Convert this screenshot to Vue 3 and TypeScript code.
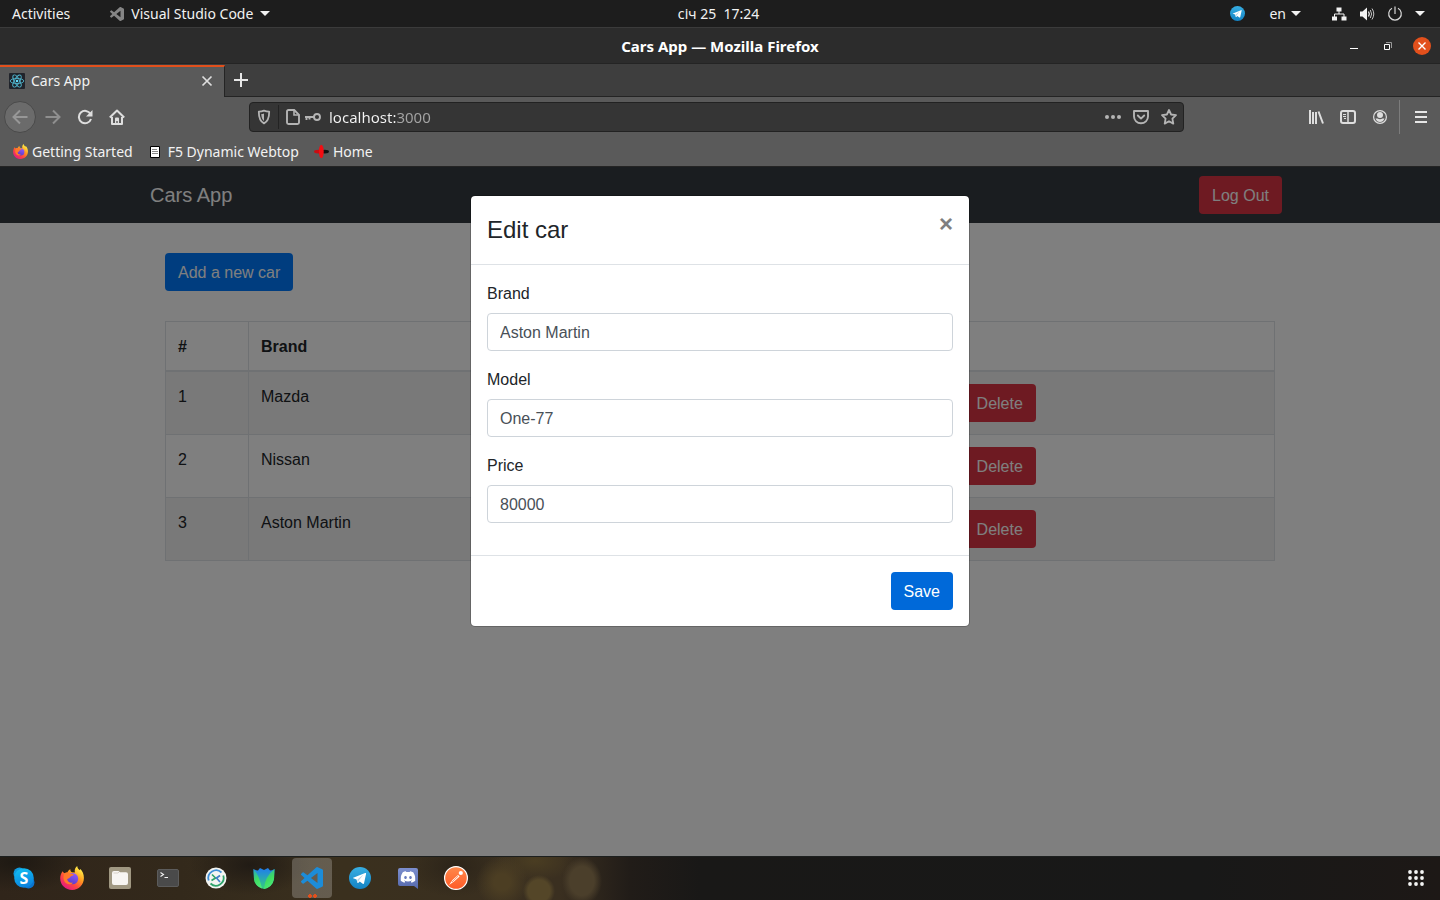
<script setup lang="ts">
import { reactive, ref } from 'vue'

interface Car {
  id: number
  brand: string
  model?: string
  price?: number
}

const cars = ref<Car[]>([
  { id: 1, brand: 'Mazda' },
  { id: 2, brand: 'Nissan' },
  { id: 3, brand: 'Aston Martin', model: 'One-77', price: 80000 },
])

const address = ref('localhost:3000')
const showModal = ref(true)
const editedId = ref(3)
const form = reactive({ brand: 'Aston Martin', model: 'One-77', price: '80000' })

function edit(car: Car) {
  editedId.value = car.id
  form.brand = car.brand
  form.model = car.model ?? ''
  form.price = String(car.price ?? '')
  showModal.value = true
}

function remove(car: Car) {
  cars.value = cars.value.filter((c) => c.id !== car.id)
}

function save() {
  const car = cars.value.find((c) => c.id === editedId.value)
  if (car) {
    car.brand = form.brand
    car.model = form.model
    car.price = Number(form.price)
  }
  showModal.value = false
}
</script>

<template>
  <div class="desktop">
    <svg class="sprites" width="0" height="0" aria-hidden="true">
      <defs>
        <linearGradient id="ff-body" x1="0.85" y1="0.1" x2="0.2" y2="0.95">
          <stop offset="0" stop-color="#fff14a" />
          <stop offset="0.35" stop-color="#ff9a1f" />
          <stop offset="0.65" stop-color="#ff4a3d" />
          <stop offset="1" stop-color="#e31587" />
        </linearGradient>
        <linearGradient id="ff-core" x1="0.7" y1="0" x2="0.3" y2="1">
          <stop offset="0" stop-color="#9059ff" />
          <stop offset="1" stop-color="#5b3bc4" />
        </linearGradient>
        <linearGradient id="tg-bg" x1="0" y1="0" x2="0" y2="1">
          <stop offset="0" stop-color="#37aee2" />
          <stop offset="1" stop-color="#1483c4" />
        </linearGradient>
        <linearGradient id="skype-bg" x1="0.3" y1="0" x2="0.6" y2="1">
          <stop offset="0" stop-color="#12bdf2" />
          <stop offset="1" stop-color="#0a7fdc" />
        </linearGradient>
        <linearGradient id="tulip-mid" x1="0" y1="0" x2="0" y2="1">
          <stop offset="0" stop-color="#1f7cf0" />
          <stop offset="1" stop-color="#35d07a" />
        </linearGradient>
        <linearGradient id="tulip-side" x1="0" y1="0" x2="0.4" y2="1">
          <stop offset="0" stop-color="#28a3c8" />
          <stop offset="0.6" stop-color="#3fdc62" />
          <stop offset="1" stop-color="#4be874" />
        </linearGradient>
        <linearGradient id="postman-bg" x1="0" y1="0" x2="0" y2="1">
          <stop offset="0" stop-color="#ff8a4c" />
          <stop offset="1" stop-color="#ff5a26" />
        </linearGradient>
        <linearGradient id="discord-bg" x1="0" y1="0" x2="0" y2="1">
          <stop offset="0" stop-color="#7d8fce" />
          <stop offset="1" stop-color="#5468ac" />
        </linearGradient>
      </defs>
      <symbol id="i-vscode" viewBox="0 0 24 24">
        <path d="M23.15 2.587L18.21.21a1.494 1.494 0 0 0-1.705.29l-9.46 8.63-4.12-3.128a.999.999 0 0 0-1.276.057L.327 7.261A1 1 0 0 0 .326 8.74L3.899 12 .326 15.26a1 1 0 0 0 .001 1.479L1.65 17.94a.999.999 0 0 0 1.276.057l4.12-3.128 9.46 8.63a1.492 1.492 0 0 0 1.704.29l4.942-2.377A1.5 1.5 0 0 0 24 20.06V3.939a1.5 1.5 0 0 0-.85-1.352zm-5.146 14.861L10.826 12l7.178-5.448v10.896z" fill="currentColor" />
      </symbol>
      <symbol id="i-telegram" viewBox="0 0 24 24">
        <circle cx="12" cy="12" r="12" fill="url(#tg-bg)" />
        <path d="M4.6 11.8 17.6 6.6c.7-.3 1.200.1 1 1.100L16.400 17.600c-.2.9-.7 1.100-1.400.7l-3.300-2.500-1.700 1.600c-.3.300-.7.200-.8-.2l-1-3.700-3.500-1.100c-.6-.2-.6-.4-.1-.6z" fill="#fff" />
        <path d="M9.200 17.200v-3.600l6.600-5.400-4.700 6z" fill="#b9d6e8" />
      </symbol>
      <symbol id="i-firefox" viewBox="0 0 24 24">
        <path d="M2.500 5.200c.7 1 1.300 1.600 2 2 .8-.6 1.800-.9 2.900-.8.500-1.400 1.600-2.600 3-3.200-.2 1.400.3 2.400 1.600 3l2.900.4c-.7-2.700.4-5 2.300-6.500.1 2 1.200 3 2.500 4.100l.7-1.100c2 2 3.500 5 3.500 9C23.900 18.900 18.700 24 12.200 24 5.400 24 .2 19 .2 12.600c0-2.900.8-5.300 2.300-7.400z" fill="url(#ff-body)" />
        <circle cx="12.600" cy="12.700" r="5.600" fill="url(#ff-core)" />
        <path d="M4.500 7.200c1.900-1 4.200-.8 5.700.7 1.300-.4 3 .1 3.700.9-.7 1-2.100 1-3.200 1.600-.7.400-.9 1.300-1.700 1.900-.9.600-1.600.6-1.900 1.200.5 2.400 3.400 3.800 6 2.900-1.500 2.600-6.500 2.600-8.500-.8-1.500-2.500-1.500-5.600-.1-8.400z" fill="#ff7a2a" />
      </symbol>
      <symbol id="i-caret" viewBox="0 0 10 5">
        <path d="M0 0h10L5 5z" fill="#f2f2f2" />
      </symbol>
    </svg>

    <header class="topbar">
      <div class="top-left">
        <button class="plain" type="button">Activities</button>
        <button class="plain app-menu" type="button">
          <svg class="app-glyph" width="14" height="14"><use href="#i-vscode" /></svg>
          Visual Studio Code
          <svg class="caret" width="10" height="5"><use href="#i-caret" /></svg>
        </button>
      </div>
      <button class="plain clock" type="button">січ 25&nbsp; 17:24</button>
      <div class="top-right">
        <svg width="15" height="15"><use href="#i-telegram" /></svg>
        <button class="plain lang" type="button">
          en
          <svg class="caret" width="10" height="5"><use href="#i-caret" /></svg>
        </button>
        <button class="plain system" type="button" aria-label="System menu">
          <svg width="16" height="16" viewBox="0 0 16 16">
            <path d="M5.500 1.500h5v4h-5zM1 10.500h5v4H1zM10.500 10.500h5v4h-5z" fill="#f2f2f2" />
            <path d="M8 5v3M3.500 11V8h9.500v3" fill="none" stroke="#f2f2f2" />
          </svg>
          <svg width="16" height="16" viewBox="0 0 16 16">
            <path d="M1 5.500h2.500L8 1.500v13l-4.500-4H1z" fill="#f2f2f2" />
            <path d="M9.500 5.500q1.600 2.500 0 5" fill="none" stroke="#f2f2f2" stroke-width="1.300" />
            <path d="M11.300 4q2.600 4 0 8M13 2.500q3.600 5.500 0 11" fill="none" stroke="#c4c4c4" />
          </svg>
          <svg width="16" height="16" viewBox="0 0 16 16">
            <path d="M5 2.200a6.300 6.300 0 1 0 6 0M8 .5v7.500" fill="none" stroke="#d8d8d8" stroke-width="1.200" />
          </svg>
          <svg class="caret" width="10" height="5"><use href="#i-caret" /></svg>
        </button>
      </div>
    </header>

    <div class="titlebar">
      <span class="window-title">Cars App — Mozilla Firefox</span>
      <div class="window-controls">
        <button type="button" aria-label="Minimize">
          <svg width="18" height="18" viewBox="0 0 18 18"><path d="M5 11.500h8" stroke="#fff" /></svg>
        </button>
        <button type="button" aria-label="Restore">
          <svg width="18" height="18" viewBox="0 0 18 18">
            <path d="M7 5.500h5.500V11" fill="none" stroke="#999" />
            <path d="M5.500 7.500h5v5h-5z" fill="none" stroke="#fff" />
          </svg>
        </button>
        <button type="button" aria-label="Close window">
          <svg width="18" height="18" viewBox="0 0 18 18">
            <circle cx="9" cy="9" r="9" fill="#e2501c" />
            <path d="M5.500 5.500l7 7M12.500 5.500l-7 7" stroke="#fff" stroke-width="1.400" />
          </svg>
        </button>
      </div>
    </div>

    <div class="tabstrip">
      <div class="tab">
        <svg width="16" height="16" viewBox="0 0 16 16">
          <rect width="16" height="16" rx="1" fill="#20232a" />
          <g fill="none" stroke="#4fb3cb" stroke-width="0.900">
            <ellipse cx="8" cy="8" rx="6.800" ry="2.600" />
            <ellipse cx="8" cy="8" rx="6.800" ry="2.600" transform="rotate(60 8 8)" />
            <ellipse cx="8" cy="8" rx="6.800" ry="2.600" transform="rotate(120 8 8)" />
          </g>
          <circle cx="8" cy="8" r="1.300" fill="#61dafb" />
        </svg>
        <span class="tab-title">Cars App</span>
        <button type="button" aria-label="Close tab">
          <svg width="12" height="12" viewBox="0 0 12 12"><path d="M1.500 1.500l9 9M10.500 1.500l-9 9" stroke="#dedede" stroke-width="1.700" /></svg>
        </button>
      </div>
      <button class="new-tab" type="button" aria-label="New tab">
        <svg width="14" height="14" viewBox="0 0 14 14"><path d="M7 0v14M0 7h14" stroke="#e6e6e6" stroke-width="2" /></svg>
      </button>
    </div>

    <div class="toolbar">
      <div class="nav-buttons">
        <button class="back" type="button" aria-label="Back">
          <svg width="16" height="16" viewBox="0 0 16 16"><path d="M15.500 8H1.500M8 1.500L1.500 8 8 14.500" fill="none" stroke="#979797" stroke-width="2" /></svg>
        </button>
        <button type="button" aria-label="Forward">
          <svg width="16" height="16" viewBox="0 0 16 16"><path d="M.5 8h14M8 1.500L14.500 8 8 14.500" fill="none" stroke="#8f8f8f" stroke-width="2" /></svg>
        </button>
        <button type="button" aria-label="Reload">
          <svg width="16" height="16" viewBox="0 0 16 16">
            <path d="M13.500 5A6.200 6.200 0 1 0 14 10" fill="none" stroke="#dedede" stroke-width="2" />
            <path d="M15.500 1v6.500H9z" fill="#dedede" />
          </svg>
        </button>
        <button type="button" aria-label="Home">
          <svg width="16" height="16" viewBox="0 0 16 16">
            <path d="M.8 8.500L8 1.500l7.200 7" fill="none" stroke="#dedede" stroke-width="2" stroke-linejoin="round" />
            <path d="M3 8v7h10V8" fill="none" stroke="#dedede" stroke-width="2" stroke-linejoin="round" />
            <path d="M6 15V9.500q0-1 1-1h2q1 0 1 1V15H8.700v-3H7.300v3z" fill="#dedede" />
          </svg>
        </button>
      </div>
      <div class="spacer"></div>
      <div class="urlbar">
        <button class="shield" type="button" aria-label="Tracking protection">
          <svg width="16" height="16" viewBox="0 0 16 16">
            <path d="M8 1.600q2.500 1 5.200 1.100 0 9-5.200 11.700Q2.800 11.700 2.800 2.700 5.500 2.600 8 1.600z" fill="none" stroke="#b4b4b4" stroke-width="1.800" stroke-linejoin="round" />
            <path d="M8 4.500v7.400Q5.300 10 5.300 5.100 6.800 5 8 4.500z" fill="#b4b4b4" />
          </svg>
        </button>
        <span class="url-icons">
          <svg width="16" height="16" viewBox="0 0 16 16">
            <path d="M3.500 1h5.700L14 5.800v7.700Q14 15 12.500 15h-9Q2 15 2 13.500v-11Q2 1 3.500 1z" fill="none" stroke="#b4b4b4" stroke-width="1.900" />
            <path d="M9 1.500V6h4.500" fill="none" stroke="#b4b4b4" stroke-width="1.600" />
          </svg>
          <svg width="16" height="16" viewBox="0 0 16 16">
            <circle cx="12" cy="8" r="3" fill="none" stroke="#b4b4b4" stroke-width="1.900" />
            <path d="M9 8H0M1.500 8v3M4.500 8v2.500" fill="none" stroke="#b4b4b4" stroke-width="1.900" />
          </svg>
        </span>
        <input v-model="address" class="address" type="text" aria-label="Address" />
        <div class="url-actions">
          <button type="button" aria-label="Page actions">
            <svg width="16" height="16" viewBox="0 0 16 16" fill="#b4b4b4"><circle cx="2" cy="8" r="2" /><circle cx="8" cy="8" r="2" /><circle cx="14" cy="8" r="2" /></svg>
          </button>
          <button type="button" aria-label="Save to Pocket">
            <svg width="16" height="16" viewBox="0 0 16 16" fill="none" stroke="#b4b4b4" stroke-width="1.900" stroke-linecap="round" stroke-linejoin="round">
              <path d="M1 2h14v5.500a7 6.800 0 0 1-14 0z" />
              <path d="M4.800 6.500L8 9.600l3.200-3.100" />
            </svg>
          </button>
          <button type="button" aria-label="Bookmark this page">
            <svg width="16" height="16" viewBox="0 0 16 16"><path d="M8 1l2.100 4.500 4.900.6-3.600 3.500.9 5L8 12.200l-4.300 2.400.9-5L1 6.100l4.900-.6z" fill="none" stroke="#b4b4b4" stroke-width="1.800" stroke-linejoin="round" /></svg>
          </button>
        </div>
      </div>
      <div class="spacer"></div>
      <div class="tool-buttons">
        <button type="button" aria-label="Library">
          <svg width="16" height="16" viewBox="0 0 16 16" fill="none" stroke="#dedede" stroke-width="2"><path d="M2 1v14M5 3v12M8 3v12M10.500 2.500L15 14.500" /></svg>
        </button>
        <button type="button" aria-label="Sidebar">
          <svg width="16" height="16" viewBox="0 0 16 16" fill="none" stroke="#dedede"><rect x="1" y="2" width="14" height="12" rx="2" stroke-width="2" /><path d="M8 2v12" stroke-width="1.500" /><path d="M3 5.500h3M3 7.500h3M4 9.500h2" /></svg>
        </button>
        <button type="button" aria-label="Account">
          <svg width="16" height="16" viewBox="0 0 16 16">
            <circle cx="8" cy="8" r="6.400" fill="none" stroke="#dedede" stroke-width="1.200" />
            <circle cx="8" cy="6" r="3" fill="#dedede" />
            <path d="M3.500 9.500h2q2.500 1.500 5 0h2q-1.300 3.600-4.500 3.600T3.500 9.500z" fill="#dedede" />
          </svg>
        </button>
      </div>
      <button class="menu-button" type="button" aria-label="Menu">
        <svg width="12" height="12" viewBox="0 0 12 12"><path d="M0 1h12M0 6h12M0 11h12" stroke="#e6e6e6" stroke-width="2" /></svg>
      </button>
    </div>

    <nav class="bookmarks">
      <a href="#"><svg width="15" height="15"><use href="#i-firefox" /></svg>Getting Started</a>
      <a class="wide" href="#">
        <svg width="10" height="12" viewBox="0 0 10 12"><path d="M.5.5h9v11h-9z" fill="#fff" stroke="#000" /><path d="M2 3.500h5M2 5.500h6M2 7.500h6" stroke="#888" /></svg>F5 Dynamic Webtop
      </a>
      <a href="#">
        <svg width="15" height="15" viewBox="0 0 16 15">
          <ellipse cx="11.500" cy="7.500" rx="4.500" ry="2" fill="#111" />
          <ellipse cx="4.500" cy="7.500" rx="4.500" ry="2" fill="#c80d12" />
          <ellipse cx="7.800" cy="7.500" rx="2.600" ry="7.300" fill="#f20d12" />
        </svg>Home
      </a>
    </nav>

    <main class="viewport">
      <nav class="navbar">
        <div class="container navbar-inner">
          <a class="brand" href="#">Cars App</a>
          <button class="btn btn-danger" type="button">Log Out</button>
        </div>
      </nav>
      <div class="container content">
        <button class="btn btn-primary" type="button">Add a new car</button>
        <table class="cars">
          <colgroup>
            <col class="col-id" /><col class="col-brand" /><col /><col /><col class="col-actions" />
          </colgroup>
          <thead>
            <tr><th>#</th><th>Brand</th><th>Model</th><th>Price</th><th></th></tr>
          </thead>
          <tbody>
            <tr v-for="car in cars" :key="car.id">
              <td>{{ car.id }}</td>
              <td>{{ car.brand }}</td>
              <td>{{ car.model }}</td>
              <td>{{ car.price }}</td>
              <td>
                <div class="row-actions">
                  <button class="btn btn-primary" type="button" @click="edit(car)">Edit</button>
                  <button class="btn btn-danger" type="button" @click="remove(car)">Delete</button>
                </div>
              </td>
            </tr>
          </tbody>
        </table>
      </div>

      <div v-if="showModal" class="backdrop">
        <form class="modal" role="dialog" aria-labelledby="modal-title" @submit.prevent="save">
          <div class="modal-header">
            <h4 id="modal-title">Edit car</h4>
            <button class="close" type="button" aria-label="Close" @click="showModal = false">×</button>
          </div>
          <div class="modal-body">
            <div class="form-group">
              <label for="brand">Brand</label>
              <input id="brand" v-model="form.brand" type="text" />
            </div>
            <div class="form-group">
              <label for="model">Model</label>
              <input id="model" v-model="form.model" type="text" />
            </div>
            <div class="form-group">
              <label for="price">Price</label>
              <input id="price" v-model="form.price" type="text" />
            </div>
          </div>
          <div class="modal-footer">
            <button class="btn btn-save" type="submit">Save</button>
          </div>
        </form>
      </div>
    </main>

    <footer class="dock">
      <div class="launchers">
        <button type="button" aria-label="Skype">
          <svg width="22" height="22" viewBox="1 1 22 22">
            <circle cx="7.500" cy="7.500" r="6" fill="#0f9be0" />
            <circle cx="16.500" cy="16.500" r="6" fill="#0a74cf" />
            <circle cx="12" cy="12" r="9.800" fill="url(#skype-bg)" />
            <text x="12" y="17.500" text-anchor="middle" class="skype-letter">S</text>
          </svg>
        </button>
        <button type="button" aria-label="Firefox">
          <svg width="24" height="24"><use href="#i-firefox" /></svg>
        </button>
        <button type="button" aria-label="Files">
          <svg width="22" height="22" viewBox="0 0 22 22">
            <rect width="22" height="22" rx="2" fill="#a09882" />
            <path d="M3 6q0-2 2-2h4.500l1.500 1.200h6q2 0 2 2V16q0 2-2 2H5q-2 0-2-2z" fill="#f7f5f2" />
            <path d="M4.500 6H9l1-1" fill="none" stroke="#d6d0c6" />
          </svg>
        </button>
        <button type="button" aria-label="Terminal">
          <svg width="22" height="18" viewBox="0 0 22 18">
            <rect x="0.500" y="0.500" width="21" height="17" rx="1.500" fill="#4a4a4a" stroke="#5c5c5c" />
            <path d="M3.500 3.500l3 2-3 2M7.500 8.500h3.500" fill="none" stroke="#f2f2f2" stroke-width="1.100" />
          </svg>
        </button>
        <button type="button" aria-label="Remote desktop">
          <svg width="22" height="22" viewBox="0 0 22 22">
            <circle cx="11" cy="11" r="10.500" fill="#f4f5f2" />
            <path d="M16.500 5.500A7.800 7.800 0 0 0 3.700 13.500" fill="none" stroke="#3f8fd8" stroke-width="1.800" />
            <path d="M5.500 16.500A7.800 7.800 0 0 0 18.300 8.500" fill="none" stroke="#2fa36b" stroke-width="1.800" />
            <path d="M7 7.500l3.500 3.500L6.500 13.500" fill="none" stroke="#2fa36b" stroke-width="1.700" />
            <path d="M15 15l-3.500-4 3.500-2.500" fill="none" stroke="#3f7fc8" stroke-width="1.700" />
          </svg>
        </button>
        <button type="button" aria-label="Tulip">
          <svg width="22" height="22" viewBox="0 0 22 22">
            <path d="M.5 2Q4 4 5 3.500L7 1l4 2 4-2 2 2.500q2 0 4.500-1.500L21 12q-1.500 8-10 10Q2.500 20 1 12z" fill="url(#tulip-mid)" />
            <path d="M.5 2Q6 8 9 21.500 1.500 18.500 1 12z" fill="url(#tulip-side)" />
            <path d="M21.500 2Q12 9 11 22q8.500-2 10-10z" fill="url(#tulip-side)" />
          </svg>
        </button>
        <button class="active" type="button" aria-label="Visual Studio Code">
          <svg class="vscode" width="22" height="22"><use href="#i-vscode" /></svg>
          <span class="running"></span>
        </button>
        <button type="button" aria-label="Telegram">
          <svg width="22" height="22"><use href="#i-telegram" /></svg>
        </button>
        <button type="button" aria-label="Discord">
          <svg width="20" height="22" viewBox="0 0 20 22">
            <path d="M2 1h16q2 0 2 2v19l-4-3H2q-2 0-2-2V3q0-2 2-2z" fill="url(#discord-bg)" />
            <svg x="2.500" y="2.500" width="15" height="15" viewBox="0 0 24 24">
              <path fill="#fff" d="M20.317 4.370a19.790 19.790 0 0 0-4.885-1.515.074.074 0 0 0-.079.037c-.21.375-.444.864-.608 1.250a18.270 18.270 0 0 0-5.487 0 12.640 12.640 0 0 0-.617-1.250.077.077 0 0 0-.079-.037A19.736 19.736 0 0 0 3.677 4.370a.07.07 0 0 0-.032.027C.533 9.046-.32 13.580.099 18.057a.082.082 0 0 0 .031.057 19.900 19.900 0 0 0 5.993 3.030.078.078 0 0 0 .084-.028c.462-.63.874-1.295 1.226-1.994a.076.076 0 0 0-.041-.106 13.107 13.107 0 0 1-1.872-.892.077.077 0 0 1-.008-.128 10.200 10.200 0 0 0 .372-.292.074.074 0 0 1 .077-.01c3.928 1.793 8.180 1.793 12.062 0a.074.074 0 0 1 .078.010c.12.098.246.198.373.292a.077.077 0 0 1-.006.127 12.299 12.299 0 0 1-1.873.892.077.077 0 0 0-.041.107c.36.698.772 1.362 1.225 1.993a.076.076 0 0 0 .084.028 19.839 19.839 0 0 0 6.002-3.030.077.077 0 0 0 .032-.054c.5-5.177-.838-9.674-3.549-13.660a.061.061 0 0 0-.031-.030zM8.020 15.330c-1.183 0-2.157-1.085-2.157-2.419 0-1.333.956-2.419 2.157-2.419 1.210 0 2.176 1.096 2.157 2.420 0 1.333-.956 2.418-2.157 2.418zm7.975 0c-1.183 0-2.157-1.085-2.157-2.419 0-1.333.955-2.419 2.157-2.419 1.210 0 2.176 1.096 2.157 2.420 0 1.333-.946 2.418-2.157 2.418z" />
            </svg>
          </svg>
        </button>
        <button type="button" aria-label="Postman">
          <svg width="24" height="24" viewBox="0 0 24 24">
            <circle cx="12" cy="12" r="11.400" fill="url(#postman-bg)" stroke="#fff" stroke-width="1.200" />
            <path d="M5 19l3.500-5 5.500-5 1.600 1.600-5.600 5z" fill="#fff" />
            <circle cx="16.800" cy="7" r="2.100" fill="#fff" />
            <path d="M8 16l6-5.800" stroke="#ff7a40" stroke-width="0.800" />
          </svg>
        </button>
      </div>
      <button type="button" aria-label="Show applications">
        <svg width="16" height="16" viewBox="0 0 16 16" fill="#f4f4f4">
          <circle cx="2" cy="2" r="1.900" /><circle cx="8" cy="2" r="1.900" /><circle cx="14" cy="2" r="1.900" />
          <circle cx="2" cy="8" r="1.900" /><circle cx="8" cy="8" r="1.900" /><circle cx="14" cy="8" r="1.900" />
          <circle cx="2" cy="14" r="1.900" /><circle cx="8" cy="14" r="1.900" /><circle cx="14" cy="14" r="1.900" />
        </svg>
      </button>
    </footer>
  </div>
</template>

<style>
body {
  margin: 0;
}
</style>

<style scoped>
* {
  box-sizing: border-box;
}
.desktop {
  display: flex;
  flex-direction: column;
  min-height: 100vh;
  font: 14px/20px "Noto Sans", "Open Sans", sans-serif;
  color: #f2f2f2;
}
.sprites {
  position: absolute;
}
svg {
  display: block;
  flex: none;
}
button {
  display: flex;
  align-items: center;
  justify-content: center;
  padding: 0;
  border: 0;
  background: none;
  color: inherit;
  font: inherit;
}
.topbar {
  display: grid;
  grid-template-columns: 1fr auto 1fr;
  align-items: center;
  height: 28px;
  padding: 0 15px 0 12px;
  background: #1d1d1d;
  border-bottom: 1px solid #3b3b3b;
}
.top-left,
.top-right {
  display: flex;
  align-items: center;
}
.top-left {
  gap: 40px;
}
.top-right {
  justify-content: flex-end;
  gap: 24px;
}
.app-menu {
  gap: 7px;
}
.app-glyph {
  color: #858585;
}
.lang {
  gap: 5px;
  margin-right: 6px;
}
.system {
  gap: 12px;
}
.titlebar {
  display: grid;
  grid-template-columns: 1fr auto 1fr;
  align-items: center;
  height: 36px;
  padding: 0 9px;
  background: #2c2c2c;
  border-bottom: 1px solid #242424;
}
.window-title {
  grid-column: 2;
  font-size: 15px;
  font-weight: 700;
  color: #fff;
}
.window-controls {
  display: flex;
  justify-content: flex-end;
  gap: 16px;
}
.tabstrip {
  display: flex;
  height: 33px;
  background: #3e3e3e;
}
.tab {
  display: flex;
  align-items: center;
  gap: 6px;
  width: 225px;
  margin-top: 1px;
  padding: 0 11px 2px 9px;
  background: #5a5a5a;
  border-top: 2px solid #e2501c;
  border-right: 1px solid #242424;
}
.tab-title {
  flex: 1;
}
.new-tab {
  flex: 1;
  justify-content: flex-start;
  padding-left: 9px;
  border-bottom: 1px solid #242424;
}
.toolbar {
  display: flex;
  align-items: center;
  height: 40px;
  padding-left: 4px;
  background: #5a5a5a;
}
.nav-buttons,
.tool-buttons {
  display: flex;
}
.nav-buttons button,
.tool-buttons button {
  width: 32px;
  height: 32px;
}
.nav-buttons .back {
  margin-right: 1px;
  border: 1px solid #4a4a4a;
  border-radius: 16px;
  background: #6b6b6b;
}
.spacer {
  flex: 0 1 116px;
}
.urlbar {
  display: flex;
  flex: 1;
  align-items: center;
  height: 30px;
  background: #353535;
  border: 1px solid #222;
  border-radius: 4px;
}
.shield {
  width: 29px;
  height: 24px;
  border-right: 1px solid #232323;
}
.url-icons {
  display: flex;
  gap: 4px;
  padding: 0 8px 0 6px;
}
.address {
  flex: 1;
  min-width: 0;
  padding: 0;
  border: 0;
  outline: 0;
  font: inherit;
  font-size: 15px;
  color: transparent;
  background: linear-gradient(to right, #f5f5f5 67px, #a5a5a5 67px);
  background-clip: text;
  -webkit-background-clip: text;
}
.url-actions {
  display: flex;
  gap: 12px;
  padding: 0 6px;
}
.menu-button {
  width: 41px;
  height: 34px;
  margin-left: 3px;
  padding-left: 1px;
  border-left: 1px solid #7c7c7c;
}
.bookmarks {
  display: flex;
  align-items: center;
  gap: 15px;
  height: 30px;
  padding: 0 13px;
  background: #5a5a5a;
  border-bottom: 1px solid #242424;
}
.bookmarks a {
  display: flex;
  align-items: center;
  gap: 4px;
  color: inherit;
  text-decoration: none;
}
.bookmarks .wide {
  gap: 8px;
  margin-left: 2px;
}
.viewport {
  position: relative;
  flex: 1;
  font: 16px/24px "Liberation Sans", Arial, sans-serif;
  color: #212529;
  background: #fff;
}
.container {
  max-width: 1140px;
  margin: 0 auto;
}
.navbar {
  background: #343a40;
}
.navbar-inner {
  display: flex;
  align-items: center;
  justify-content: space-between;
  height: 56px;
  padding-right: 8px;
}
.brand {
  font-size: 20px;
  color: #fff;
  text-decoration: none;
}
.content {
  padding: 30px 15px;
}
.btn {
  padding: 8px 13px 6px;
  border-radius: 4px;
  color: #fff;
}
.btn-primary {
  background: #007bff;
}
.btn-danger {
  background: #dc3545;
}
.btn-save {
  background: #0069d9;
}
.cars {
  width: 100%;
  margin-top: 30px;
  table-layout: fixed;
  border-collapse: collapse;
  border: 1px solid #dee2e6;
}
.col-id {
  width: 83px;
}
.col-brand {
  width: 240px;
}
.col-actions {
  width: 382px;
}
.cars th,
.cars td {
  padding: 12px;
  border: 1px solid #dee2e6;
  text-align: left;
  vertical-align: top;
}
.cars th {
  padding: 13px 12px 11px;
  border-bottom-width: 2px;
}
.cars td:not(:last-child) {
  padding-top: 13px;
}
.cars tbody tr:nth-child(odd) {
  background: rgba(0, 0, 0, 0.05);
}
.row-actions {
  display: flex;
  gap: 5px;
}
.backdrop {
  position: absolute;
  inset: 0;
  padding: 28px 16px;
  background: rgba(0, 0, 0, 0.5);
}
.modal {
  max-width: 500px;
  margin: 0 auto;
  background: #fff;
  background-clip: padding-box;
  border: 1px solid rgba(0, 0, 0, 0.2);
  border-radius: 5px;
}
.modal-header {
  display: flex;
  align-items: flex-start;
  justify-content: space-between;
  padding: 16px;
  border-bottom: 1px solid #dee2e6;
}
.modal-header h4 {
  margin: 0;
  font-size: 24px;
  line-height: 36px;
  font-weight: 400;
}
.close {
  font-size: 24px;
  line-height: 24px;
  font-weight: 700;
  color: #7f7f7f;
}
.modal-body {
  padding: 17px 16px 16px;
}
.form-group {
  margin-bottom: 16px;
}
.form-group label {
  display: block;
  margin-bottom: 7px;
}
.form-group + .form-group {
  padding-top: 1px;
}
.form-group input {
  display: block;
  width: 100%;
  height: 38px;
  padding: 7px 12px 5px;
  border: 1px solid #ced4da;
  border-radius: 4px;
  background: #fff;
  color: #495057;
  font: inherit;
}
.modal-footer {
  display: flex;
  justify-content: flex-end;
  padding: 16px;
  border-top: 1px solid #dee2e6;
}
.dock {
  display: flex;
  align-items: flex-start;
  justify-content: space-between;
  height: 44px;
  padding: 1px 4px 0;
  border-top: 1px solid #1c1f1e;
  background:
    radial-gradient(circle at 539px 34px, #544628 11px, transparent 16px),
    radial-gradient(ellipse 20px 24px at 582px 24px, #4b3f2b 60%, transparent 100%),
    radial-gradient(circle at 502px 25px, #4c3e23 8px, transparent 26px),
    radial-gradient(ellipse 40px 20px at 535px 4px, #4a3d22, transparent),
    radial-gradient(ellipse 70px 30px at 15px 5px, #1e1913, transparent),
    radial-gradient(ellipse 60px 30px at 250px 8px, #211b15, transparent),
    radial-gradient(ellipse 50px 30px at 455px 10px, #2c2419, transparent),
    linear-gradient(to right, #30251a 0, #33291b 180px, #3a301e 340px, #3a2f20 560px, #211c18 630px, #191817 700px, #181818 1200px, #1d1816 100%);
}
.dock button {
  position: relative;
  width: 40px;
  height: 40px;
  border-radius: 4px;
}
.launchers {
  display: flex;
  gap: 8px;
}
.dock .active {
  background: rgba(255, 255, 255, 0.22);
}
.vscode {
  color: #1c8cd8;
}
.running {
  position: absolute;
  bottom: 0;
  width: 9px;
  height: 4px;
  background: radial-gradient(circle at 2px 2px, #e2501c 2px, transparent 2px) 0 0 / 5px 4px;
}
.skype-letter {
  font: 700 16px "Open Sans", sans-serif;
  fill: #fff;
}
</style>
